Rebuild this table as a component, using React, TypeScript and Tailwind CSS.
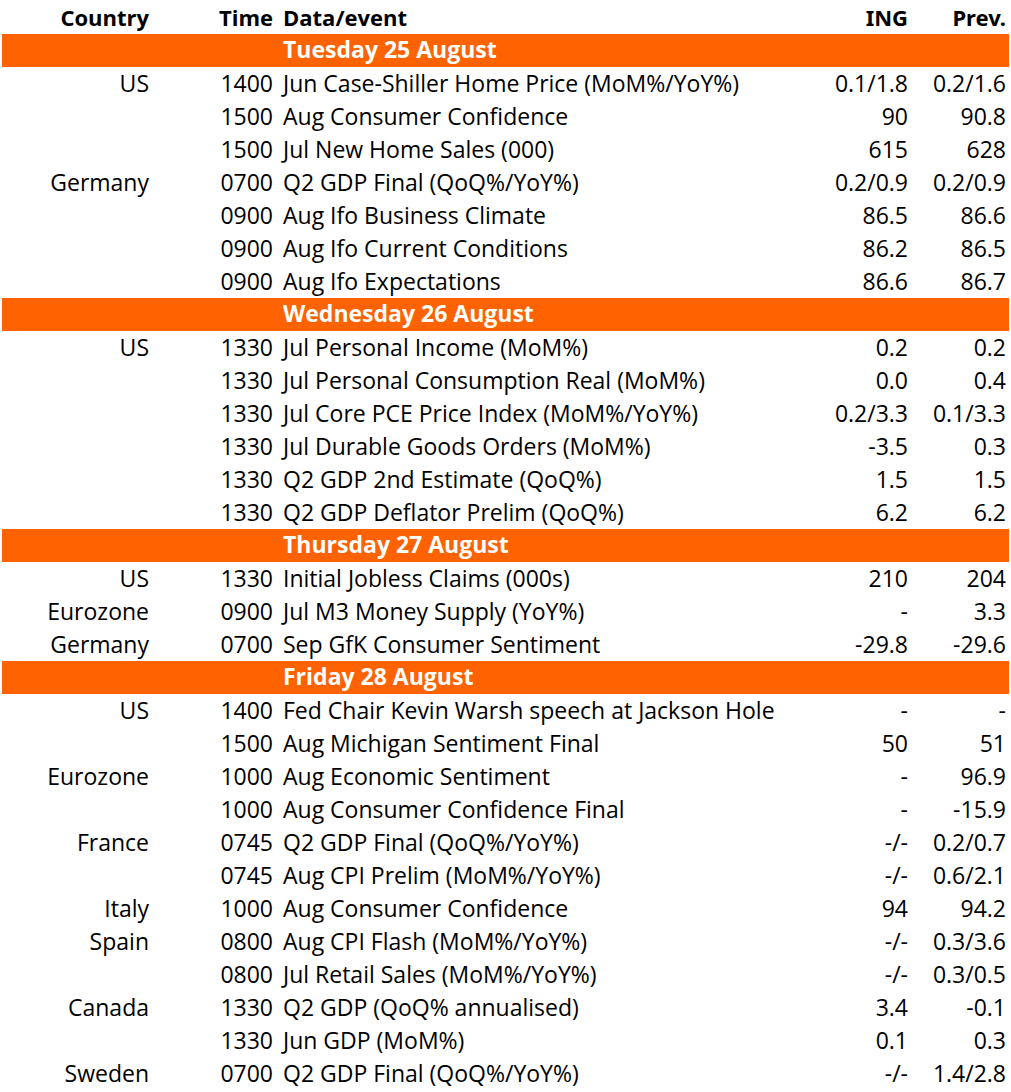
type Row = [string, string, string, string, string];

type Day = { title: string; rows: Row[] };

const days: Day[] = [
  {
    title: 'Tuesday 25 August',
    rows: [
      ['US', '1400', 'Jun Case-Shiller Home Price (MoM%/YoY%)', '0.1/1.8', '0.2/1.6'],
      ['', '1500', 'Aug Consumer Confidence', '90', '90.8'],
      ['', '1500', 'Jul New Home Sales (000)', '615', '628'],
      ['Germany', '0700', 'Q2 GDP Final (QoQ%/YoY%)', '0.2/0.9', '0.2/0.9'],
      ['', '0900', 'Aug Ifo Business Climate', '86.5', '86.6'],
      ['', '0900', 'Aug Ifo Current Conditions', '86.2', '86.5'],
      ['', '0900', 'Aug Ifo Expectations', '86.6', '86.7'],
    ],
  },
  {
    title: 'Wednesday 26 August',
    rows: [
      ['US', '1330', 'Jul Personal Income (MoM%)', '0.2', '0.2'],
      ['', '1330', 'Jul Personal Consumption Real (MoM%)', '0.0', '0.4'],
      ['', '1330', 'Jul Core PCE Price Index (MoM%/YoY%)', '0.2/3.3', '0.1/3.3'],
      ['', '1330', 'Jul Durable Goods Orders (MoM%)', '-3.5', '0.3'],
      ['', '1330', 'Q2 GDP 2nd Estimate (QoQ%)', '1.5', '1.5'],
      ['', '1330', 'Q2 GDP Deflator Prelim (QoQ%)', '6.2', '6.2'],
    ],
  },
  {
    title: 'Thursday 27 August',
    rows: [
      ['US', '1330', 'Initial Jobless Claims (000s)', '210', '204'],
      ['Eurozone', '0900', 'Jul M3 Money Supply (YoY%)', '-', '3.3'],
      ['Germany', '0700', 'Sep GfK Consumer Sentiment', '-29.8', '-29.6'],
    ],
  },
  {
    title: 'Friday 28 August',
    rows: [
      ['US', '1400', 'Fed Chair Kevin Warsh speech at Jackson Hole', '-', '-'],
      ['', '1500', 'Aug Michigan Sentiment Final', '50', '51'],
      ['Eurozone', '1000', 'Aug Economic Sentiment', '-', '96.9'],
      ['', '1000', 'Aug Consumer Confidence Final', '-', '-15.9'],
      ['France', '0745', 'Q2 GDP Final (QoQ%/YoY%)', '-/-', '0.2/0.7'],
      ['', '0745', 'Aug CPI Prelim (MoM%/YoY%)', '-/-', '0.6/2.1'],
      ['Italy', '1000', 'Aug Consumer Confidence', '94', '94.2'],
      ['Spain', '0800', 'Aug CPI Flash (MoM%/YoY%)', '-/-', '0.3/3.6'],
      ['', '0800', 'Jul Retail Sales (MoM%/YoY%)', '-/-', '0.3/0.5'],
      ['Canada', '1330', 'Q2 GDP (QoQ% annualised)', '3.4', '-0.1'],
      ['', '1330', 'Jun GDP (MoM%)', '0.1', '0.3'],
      ['Sweden', '0700', 'Q2 GDP Final (QoQ%/YoY%)', '-/-', '1.4/2.8'],
    ],
  },
];

// country | time | event | ING | prev
const grid = 'grid grid-cols-[150px_133px_1fr_128px_97px]';

function DataRow({ row }: { row: Row }) {
  const [country, time, event, ing, prev] = row;
  return (
    <div className={`${grid} h-[33px] items-center text-[23px] leading-none text-black`}>
      <div className="pr-[1px] text-right">{country}</div>
      <div className="pr-[10px] text-right">{time}</div>
      <div className="whitespace-nowrap">{event}</div>
      <div className="pr-[6px] text-right">{ing}</div>
      <div className="pr-[5px] text-right">{prev}</div>
    </div>
  );
}

export default function App() {
  return (
    <div className="w-[1011px] bg-white font-['Open_Sans',sans-serif]">
      <div className={`${grid} h-[34px] items-center text-[22px] font-bold leading-none text-black`}>
        <div className="pr-[1px] text-right">Country</div>
        <div className="pr-[10px] text-right">Time</div>
        <div>Data/event</div>
        <div className="pr-[6px] text-right font-['Noto_Sans',sans-serif]">ING</div>
        <div className="pr-[5px] text-right font-['Noto_Sans',sans-serif]">Prev.</div>
      </div>
      {days.map((day) => (
        <div key={day.title}>
          <div className="mx-[2px] flex h-[33px] items-center bg-[#ff6200] pb-[3px] pl-[281px] text-[23px] font-bold leading-none text-white">
            {day.title}
          </div>
          {day.rows.map((row, i) => (
            <DataRow key={i} row={row} />
          ))}
        </div>
      ))}
    </div>
  );
}
